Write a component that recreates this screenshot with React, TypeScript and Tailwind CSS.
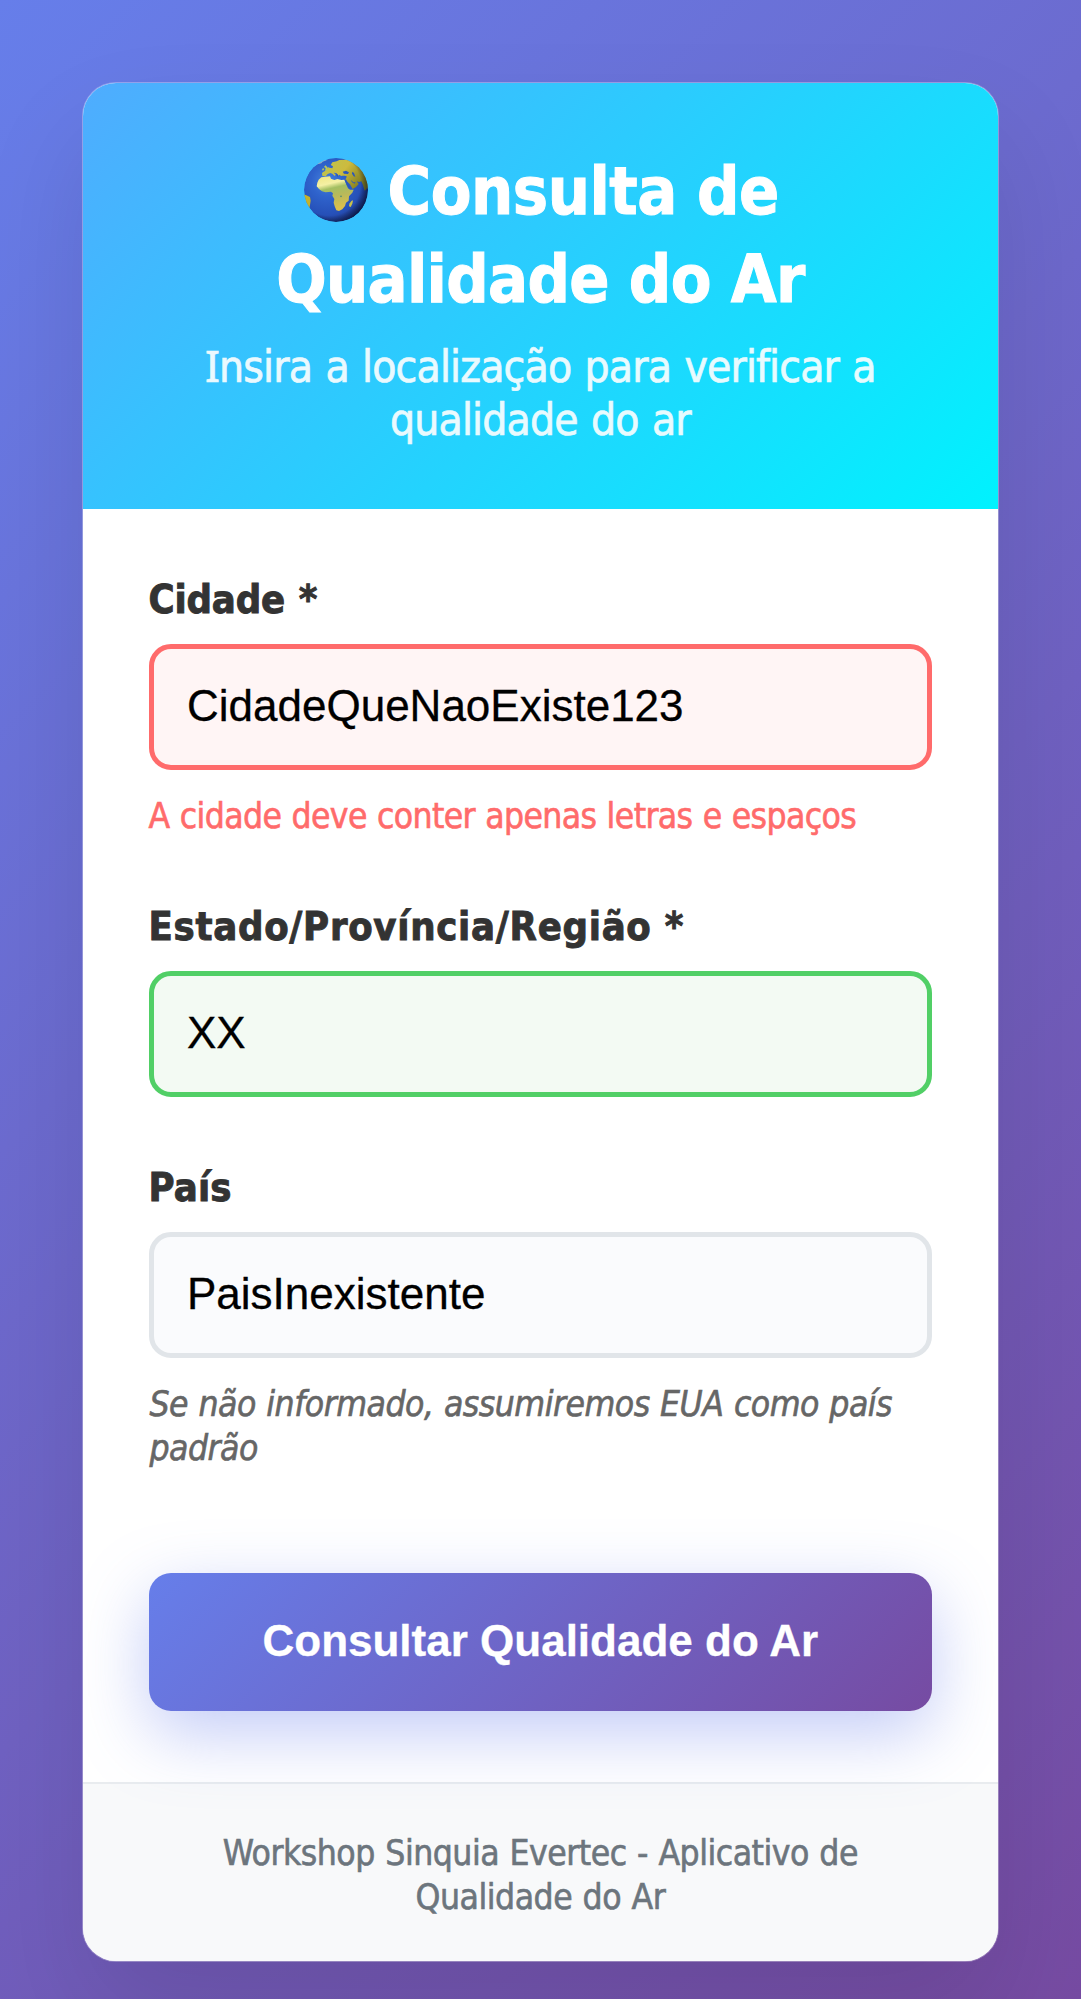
import React from "react";

function Globe() {
  return (
    <svg viewBox="42 39 192 192" className="mr-[20px] mb-[3.5px] h-16 w-16 shrink-0" aria-hidden="true">
      <defs>
        <radialGradient id="ocean" cx="0.36" cy="0.36" r="0.7">
          <stop offset="0" stopColor="#4582dc" />
          <stop offset="0.35" stopColor="#2f63cc" />
          <stop offset="0.75" stopColor="#2650b8" />
          <stop offset="1" stopColor="#1f3585" />
        </radialGradient>
        <linearGradient id="africa" x1="0" y1="0" x2="0.25" y2="1">
          <stop offset="0" stopColor="#f0e682" />
          <stop offset="0.28" stopColor="#f4f0a4" />
          <stop offset="0.42" stopColor="#a3bf62" />
          <stop offset="0.65" stopColor="#b9b95a" />
          <stop offset="1" stopColor="#dcc04c" />
        </linearGradient>
        <linearGradient id="eurasia" x1="0" y1="0" x2="1" y2="0.5">
          <stop offset="0" stopColor="#b8c552" />
          <stop offset="0.5" stopColor="#cdbb3e" />
          <stop offset="1" stopColor="#7d7a1c" />
        </linearGradient>
        <radialGradient id="shade" cx="0.4" cy="0.42" r="0.62">
          <stop offset="0.78" stopColor="#000820" stopOpacity="0" />
          <stop offset="1" stopColor="#000820" stopOpacity="0.6" />
        </radialGradient>
        <clipPath id="disc">
          <circle cx="138" cy="135" r="96" />
        </clipPath>
      </defs>
      <g clipPath="url(#disc)">
        <circle cx="138" cy="135" r="96" fill="url(#ocean)" />
        <path
          fill="url(#eurasia)"
          d="M96 84L97 93L107 94L113 87L121 84L127 86L134 93L137 89L131 83L138 84L145 92L149 89L153 93L158 92L164 92L170 94L169 99L165 104L172 110L180 118L188 132L198 126L206 117L200 109L207 111L214 109L219 120L224 137L229 133L240 120L235 90L215 62L190 47L166 44L148 45L140 49L127 52L122 60L129 64L127 70L118 68L113 66L109 76L101 80Z"
        />
        <path fill="#b9c65a" d="M106 61L111 65L113 75L105 78L107 69L102 66ZM99 69L103 72L99 77L96 74Z" />
        <path fill="#d5dfc8" d="M78 58L92 47L106 42L110 46L98 50L94 55L86 57Z" opacity="0.6" />
        <path
          fill="url(#africa)"
          d="M94 97L106 95L120 94L123 101L133 105L142 102L154 105L163 104L167 114L174 130L180 134L191 134L187 143L177 154L176 167L168 173L165 183L157 193L147 198L139 196L134 184L131 173L133 162L127 152L129 145L123 140L107 142L96 139L87 132L80 124L82 113L86 104Z"
        />
        <path
          fill="#2b57bb"
          d="M139 84L145 91L144 97L139 91ZM158 80L168 77L177 82L174 87L162 86ZM187 80L192 84L196 95L191 94L186 86ZM164 104L168 103L174 115L181 127L178 129L170 119ZM182 104L190 112L197 112L194 116L186 112Z"
        />
        <ellipse cx="153" cy="154" rx="3" ry="2.5" fill="#5c8f74" />
        <path fill="#cbc04a" d="M184 168L189 166L187 176L182 186L177 184L178 176Z" />
        <path fill="#c4b22c" d="M40 148L49 151L60 156L62 167L60 180L58 190L50 186Z" />
        <circle cx="138" cy="135" r="96" fill="url(#shade)" />
      </g>
    </svg>
  );
}

interface FieldProps {
  id: string;
  label: string;
  labelClass: string;
  value: string;
  inputClass: string;
}

function Field({ id, label, labelClass, value, inputClass }: FieldProps) {
  return (
    <div className="flex flex-col">
      <label
        htmlFor={id}
        className={`mb-[21.1px] whitespace-nowrap text-[39.6px] leading-[48px] font-bold text-[#333333] [-webkit-text-stroke:0.9px_#333333] ${labelClass}`}
      >
        {label}
      </label>
      <input
        id={id}
        type="text"
        spellCheck={false}
        defaultValue={value}
        className={`h-[126.3px] w-full rounded-[22px] border-[5.5px] px-[33.5px] pb-[2px] font-['Liberation_Sans',Arial,sans-serif] text-[44px] text-black outline-none [-webkit-text-stroke:0.3px_#000000] ${inputClass}`}
      />
    </div>
  );
}

export default function App() {
  return (
    <div className="h-[1999px] w-full overflow-hidden bg-[linear-gradient(135deg,#667eea_0%,#764ba2_100%)] pt-[82.5px] pl-[82.5px] font-['DejaVu_Sans_Condensed','DejaVu_Sans',Tahoma,sans-serif]">
      <main className="flex h-[1878.2px] w-[915.75px] flex-col overflow-hidden rounded-[33px] bg-white shadow-[0_0_0_1px_rgba(255,255,255,0.3),0_55px_110px_rgba(0,0,0,0.1)]">
        <header className="flex h-[426.2px] shrink-0 flex-col bg-[linear-gradient(135deg,#4facfe_0%,#00f2fe_100%)] pt-[65.2px] text-center text-white">
          <h1 className="text-[66px] leading-[88px] font-bold whitespace-nowrap [-webkit-text-stroke:1px_#ffffff]">
            <span className="flex h-[88px] items-center justify-center pl-[1.6px] tracking-[-0.48px]">
              <Globe />
              Consulta de
            </span>
            <span className="block tracking-[-0.68px]">Qualidade do Ar</span>
          </h1>
          <p className="mt-[15.3px] text-[44px] leading-[53px] tracking-[-0.85px] whitespace-nowrap opacity-90 [word-spacing:1.6px] [-webkit-text-stroke:0.7px_#ffffff]">
            <span className="font-['Noto_Sans']">I</span>nsira a localização para verificar a
            <br />
            qualidade do ar
          </p>
        </header>

        <form className="flex shrink-0 flex-col px-[66px] pt-[65.9px] pb-[71.2px]">
          <Field
            id="cidade"
            label="Cidade *"
            labelClass="tracking-[-0.15px] [word-spacing:1.5px]"
            value="CidadeQueNaoExiste123"
            inputClass="border-[#ff6b6b] bg-[#fff5f5]"
          />
          <p className="mt-[24.4px] text-[35.2px] leading-[44px] tracking-[-0.61px] whitespace-nowrap text-[#ff6b6b] [word-spacing:0.7px] [-webkit-text-stroke:0.6px_#ff6b6b]">
            A cidade deve conter apenas letras e espaços
          </p>

          <div className="mt-[63.15px]">
            <Field
              id="estado"
              label="Estado/Província/Região *"
              labelClass="tracking-[0.72px]"
              value="XX"
              inputClass="border-[#51cf66] bg-[#f3faf3]"
            />
          </div>

          <div className="mt-[65.95px]">
            <Field
              id="pais"
              label="País"
              labelClass="tracking-[0.2px]"
              value="PaisInexistente"
              inputClass="border-[#e1e5e9] bg-[#fafbfd]"
            />
          </div>
          <p className="mt-[24.1px] pl-px text-[35.2px] leading-[44px] tracking-[-0.5px] whitespace-nowrap text-[#666666] italic [word-spacing:0.9px] [-webkit-text-stroke:0.6px_#666666]">
            Se não informado, assumiremos EUA como país
            <br />
            padrão
          </p>

          <button
            type="button"
            className="relative mt-[102.9px] h-[138px] w-full rounded-[22px] bg-[linear-gradient(135deg,#667eea_0%,#764ba2_100%)] pb-0.5 font-['Liberation_Sans',Arial,sans-serif] text-[44px] font-bold whitespace-nowrap text-white shadow-[0_22px_68.75px_rgba(102,126,234,0.4)] [-webkit-text-stroke:0.3px_#ffffff]"
          >
            Consultar Qualidade do Ar
          </button>
        </form>

        <footer className="flex-1 border-t-[2.75px] border-[#e9ecef] bg-[#f8f9fa] pt-[46.4px] text-center text-[35.2px] leading-[44px] tracking-[-0.5px] whitespace-nowrap text-[#6c757d] [word-spacing:0.9px] [-webkit-text-stroke:0.6px_#6c757d]">
          Workshop Sinquia Evertec - Aplicativo de
          <br />
          Qualidade do Ar
        </footer>
      </main>
    </div>
  );
}
